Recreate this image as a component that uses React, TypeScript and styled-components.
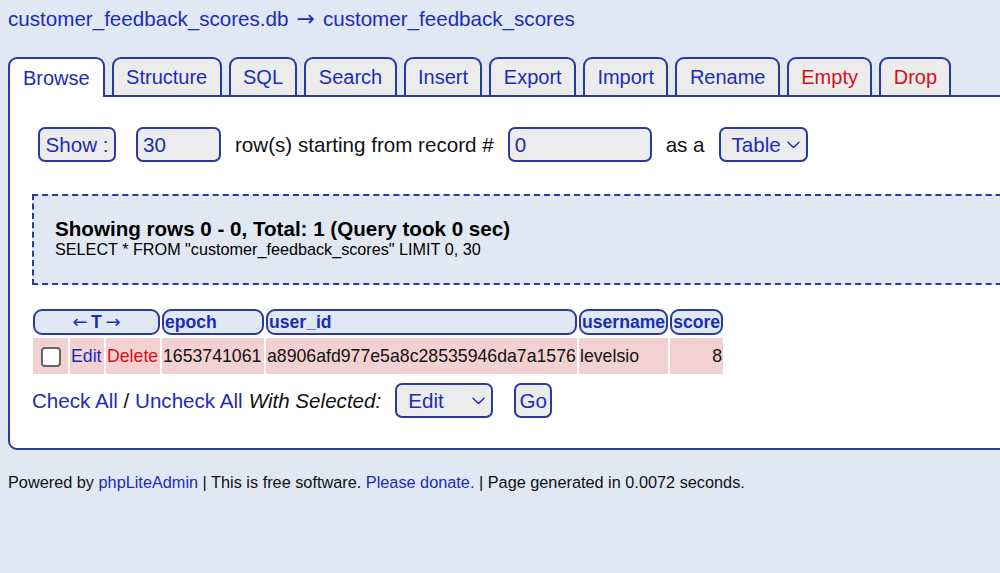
import React from 'react'
import styled, { createGlobalStyle, css } from 'styled-components'

const BLUE = '#1b2db8'
const RED = '#d31218'
const LINE = '#2b3a9e'
const PAGE_BG = '#dfe8f3'

const GlobalStyle = createGlobalStyle`
    html, body {
        margin: 0;
        padding: 0;
        background: ${PAGE_BG};
        font-family: "Liberation Sans", Arial, sans-serif;
        color: #111;
        overflow: hidden;
    }
`

const Page = styled.div`
    padding: 6px 0 0 8px;
    width: 1100px;
`

const Title = styled.h1`
    margin: 0;
    font-size: 20.6px;
    font-weight: normal;
    line-height: 26px;
    color: ${BLUE};
`

const Arrow = styled.span`
    font-family: "DejaVu Sans", sans-serif;
    font-size: 22px;
    margin: 0 1px;
`

const Tabs = styled.div`
    display: flex;
    align-items: flex-end;
    gap: 7px;
    margin-top: 25px;
    position: relative;
    z-index: 1;
`

const Tab = styled.div<{ $active?: boolean; $danger?: boolean }>`
    height: 36px;
    padding: 0 12.4px;
    display: flex;
    align-items: center;
    font-size: 20px;
    color: ${props => (props.$danger ? RED : BLUE)};
    background: ${props => (props.$active ? '#fff' : '#ececec')};
    border: 2px solid ${LINE};
    border-bottom: none;
    border-radius: 9px 9px 0 0;
    ${props =>
        props.$active &&
        css`
            height: 38px;
            margin-bottom: -2px;
            padding: 0 13px;
        `}
`

const Panel = styled.div`
    background: #fff;
    border: 2px solid ${LINE};
    border-radius: 0 0 0 9px;
    padding: 30px 0 30px 22px;
    width: 1040px;
`

const ShowRow = styled.div`
    display: flex;
    align-items: center;
    margin-left: 6px;
    font-size: 20.6px;
`

const Label = styled.span`
    margin: 0 14px;
`

const Spacer = styled.span<{ $width: number }>`
    width: ${props => props.$width}px;
    flex: none;
`

const Field = styled.div<{ $width: number }>`
    box-sizing: border-box;
    width: ${props => props.$width}px;
    height: 35px;
    border: 2px solid ${LINE};
    border-radius: 7px;
    background: #ececec;
    color: ${BLUE};
    font-size: 20.6px;
    display: flex;
    align-items: center;
    padding: 0 5px;
`

const Button = styled.button<{ $width: number }>`
    box-sizing: border-box;
    width: ${props => props.$width}px;
    height: 35px;
    border: 2px solid ${LINE};
    border-radius: 7px;
    background: #ececec;
    color: ${BLUE};
    font-family: inherit;
    font-size: 20.6px;
    padding: 0;
`

const SelectBox = styled.div<{ $width: number }>`
    box-sizing: border-box;
    width: ${props => props.$width}px;
    height: 35px;
    border: 2px solid ${LINE};
    border-radius: 7px;
    background: #ececec;
    color: ${BLUE};
    font-size: 20.6px;
    display: flex;
    align-items: center;
    justify-content: space-between;
    padding: 0 6px 0 11px;
`

const Chevron = () => (
    <svg width="13" height="8" viewBox="0 0 13 8" fill="none">
        <path d="M1 1.2 L6.5 6.5 L12 1.2" stroke={BLUE} strokeWidth="1.4" strokeLinecap="round" strokeLinejoin="round" />
    </svg>
)

const InfoBox = styled.div`
    margin-top: 32px;
    background: ${PAGE_BG};
    border: 2px dashed ${LINE};
    border-right: none;
    padding: 21px 0 24px 21px;
`

const InfoTitle = styled.div`
    font-size: 20.6px;
    font-weight: bold;
    line-height: 23px;
    color: #000;
`

const InfoQuery = styled.div`
    font-size: 16.2px;
    line-height: 19px;
    color: #000;
`

const Grid = styled.table`
    margin-top: 21px;
    margin-left: -1px;
    border-collapse: separate;
    border-spacing: 2px 3px;
    font-size: 17.7px;
    table-layout: fixed;
`

const HeadCell = styled.th<{ $width?: number; $center?: boolean }>`
    box-sizing: border-box;
    height: 26px;
    padding: 0 1px;
    width: ${props => (props.$width ? props.$width + 'px' : 'auto')};
    border: 2px solid ${LINE};
    border-radius: 9px;
    background: ${PAGE_BG};
    color: ${BLUE};
    font-size: 17.6px;
    font-weight: bold;
    text-align: ${props => (props.$center ? 'center' : 'left')};
    line-height: 19px;
    white-space: nowrap;
`

const HeadArrow = styled.span`
    font-family: "DejaVu Sans", sans-serif;
    font-weight: normal;
    font-size: 18px;
`

const Cell = styled.td<{ $width: number; $right?: boolean; $tone?: 'blue' | 'red' }>`
    box-sizing: border-box;
    width: ${props => props.$width}px;
    height: 36px;
    padding: 0 1px;
    background: #f3d1d1;
    text-align: ${props => (props.$right ? 'right' : 'left')};
    color: ${props => (props.$tone === 'blue' ? BLUE : props.$tone === 'red' ? RED : '#111')};
    white-space: nowrap;
    overflow: hidden;
`

const CheckCell = styled(Cell)`
    text-align: center;
`

const Check = styled.span`
    display: inline-block;
    box-sizing: border-box;
    width: 20px;
    height: 20px;
    border: 2px solid #666;
    border-radius: 4px;
    background: #fff;
    vertical-align: middle;
`

const ActionRow = styled.div`
    display: flex;
    align-items: center;
    margin-top: 6px;
    font-size: 20.6px;
`

const Link = styled.span`
    color: ${BLUE};
`

const Italic = styled.em`
    margin-left: 6px;
`

const Footer = styled.div`
    margin-top: 22px;
    font-size: 16.3px;
    line-height: 20px;
    color: #111;
`

const tabs = [
    { label: 'Browse', active: true },
    { label: 'Structure' },
    { label: 'SQL' },
    { label: 'Search' },
    { label: 'Insert' },
    { label: 'Export' },
    { label: 'Import' },
    { label: 'Rename' },
    { label: 'Empty', danger: true },
    { label: 'Drop', danger: true },
]

const App: React.FC = () => (
    <>
        <GlobalStyle />
        <Page>
            <Title>
                customer_feedback_scores.db<Arrow> → </Arrow>customer_feedback_scores
            </Title>
            <Tabs>
                {tabs.map(t => (
                    <Tab key={t.label} $active={t.active} $danger={t.danger}>
                        {t.label}
                    </Tab>
                ))}
            </Tabs>
            <Panel>
                <ShowRow>
                    <Button $width={78}>Show :</Button>
                    <Spacer $width={20} />
                    <Field $width={85}>30</Field>
                    <Label>row(s) starting from record #</Label>
                    <Field $width={144}>0</Field>
                    <Label>as a</Label>
                    <SelectBox $width={89}>
                        Table
                        <Chevron />
                    </SelectBox>
                </ShowRow>

                <InfoBox>
                    <InfoTitle>Showing rows 0 - 0, Total: 1 (Query took 0 sec)</InfoTitle>
                    <InfoQuery>SELECT * FROM "customer_feedback_scores" LIMIT 0, 30</InfoQuery>
                </InfoBox>

                <Grid>
                    <thead>
                        <tr>
                            <HeadCell colSpan={3} $center>
                                <HeadArrow>←</HeadArrow>&thinsp;T&thinsp;<HeadArrow>→</HeadArrow>
                            </HeadCell>
                            <HeadCell $width={102}>epoch</HeadCell>
                            <HeadCell $width={311}>user_id</HeadCell>
                            <HeadCell $width={89}>username</HeadCell>
                            <HeadCell $width={52}>score</HeadCell>
                        </tr>
                    </thead>
                    <tbody>
                        <tr>
                            <CheckCell $width={35}>
                                <Check />
                            </CheckCell>
                            <Cell $width={34} $tone="blue">
                                Edit
                            </Cell>
                            <Cell $width={54} $tone="red">
                                Delete
                            </Cell>
                            <Cell $width={102}>1653741061</Cell>
                            <Cell $width={311}>a8906afd977e5a8c28535946da7a1576</Cell>
                            <Cell $width={89}>levelsio</Cell>
                            <Cell $width={52} $right>
                                8
                            </Cell>
                        </tr>
                    </tbody>
                </Grid>

                <ActionRow>
                    <Link>Check All</Link>
                    &nbsp;/&nbsp;
                    <Link>Uncheck All</Link>
                    <Italic>With Selected:</Italic>
                    <Spacer $width={14} />
                    <SelectBox $width={98}>
                        Edit
                        <Chevron />
                    </SelectBox>
                    <Spacer $width={21} />
                    <Button $width={38}>Go</Button>
                </ActionRow>
            </Panel>
            <Footer>
                Powered by <Link>phpLiteAdmin</Link> | This is free software. <Link>Please donate.</Link> | Page generated in
                0.0072 seconds.
            </Footer>
        </Page>
    </>
)

export default App
